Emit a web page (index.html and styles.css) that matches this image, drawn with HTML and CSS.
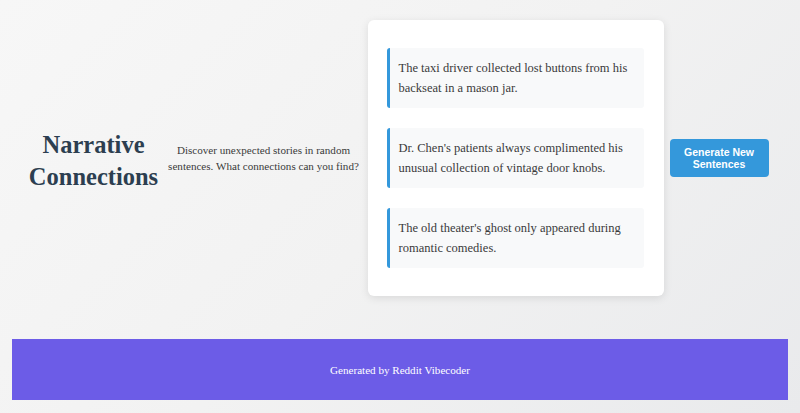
FILE: index.html
```
<!DOCTYPE html>
<html lang="en">
<head>
<meta charset="utf-8">
<title>Narrative Connections</title>
<link rel="stylesheet" href="styles.css">
</head>
<body>
<main class="main">
  <h1 class="title">Narrative Connections</h1>
  <p class="intro">Discover unexpected stories in random sentences. What connections can you find?</p>
  <section class="card">
    <div class="sentence">The taxi driver collected lost buttons from his backseat in a mason jar.</div>
    <div class="sentence">Dr. Chen's patients always complimented his unusual collection of vintage door knobs.</div>
    <div class="sentence">The old theater's ghost only appeared during romantic comedies.</div>
  </section>
  <button class="btn">Generate New Sentences</button>
</main>
<footer class="footer">Generated by Reddit Vibecoder</footer>
</body>
</html>
```
FILE: styles.css
```
html, body { height: 100%; }
body {
  margin: 0;
  padding: 12px;
  box-sizing: border-box;
  font-family: "Liberation Serif", Georgia, serif;
  background: linear-gradient(135deg, #f7f7f7 0%, #f2f2f2 50%, #e9eaec 100%);
  color: #333;
}
.main {
  display: flex;
  align-items: center;
  justify-content: center;
  gap: 6px;
  padding-top: 8px;
  padding-right: 4px;
}
.title {
  margin: 0;
  padding-top: 6px;
  width: 132px;
  text-align: center;
  font-size: 24.5px;
  line-height: 32px;
  font-weight: bold;
  color: #2c3e50;
}
.intro {
  margin: 0;
  width: 196px;
  text-align: center;
  font-size: 11.1px;
  line-height: 16px;
  color: #3a3a3a;
}
.card {
  width: 296px;
  box-sizing: border-box;
  background: #fff;
  border-radius: 6px;
  box-shadow: 0 2px 8px rgba(0,0,0,0.1);
  padding: 28px 20px 28px 19px;
  display: flex;
  flex-direction: column;
  gap: 20px;
}
.sentence {
  background: #f8f9fa;
  border-left: 3px solid #3498db;
  border-radius: 3px;
  padding: 10px 10px 10px 9px;
  font-size: 12.5px;
  line-height: 20px;
  color: #3a3a3a;
}
.btn {
  width: 99px;
  height: 38px;
  border: none;
  border-radius: 4px;
  background: #3498db;
  color: #fff;
  font-family: "Liberation Sans", Arial, sans-serif;
  font-weight: bold;
  font-size: 10.5px;
  line-height: 12px;
  padding: 0 8px;
}
.footer {
  margin-top: 43px;
  background: #6c5ce7;
  height: 61px;
  display: flex;
  align-items: center;
  justify-content: center;
  color: #fff;
  font-size: 11.1px;
}
```
